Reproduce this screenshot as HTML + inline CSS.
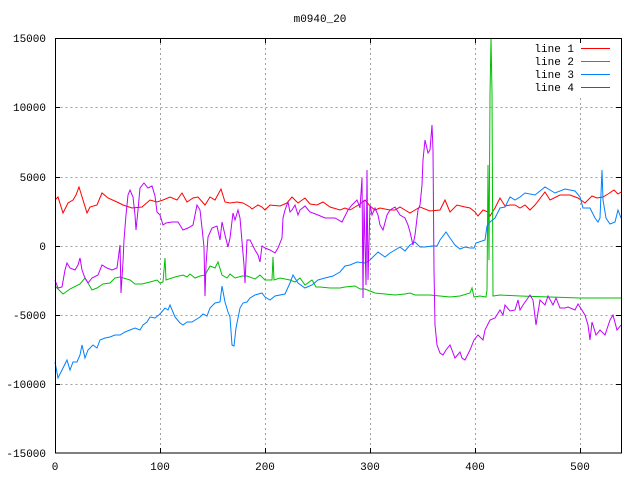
<!DOCTYPE html>
<html><head><meta charset="utf-8"><style>
html,body{margin:0;padding:0;background:#fff;width:640px;height:480px;overflow:hidden}
svg text{font-family:"Liberation Mono","DejaVu Sans Mono",monospace;font-size:11px;fill:#000}
</style></head><body>
<svg width="640" height="480" viewBox="0 0 640 480" xmlns="http://www.w3.org/2000/svg">
<rect width="640" height="480" fill="#fff"/>
<g stroke="#a0a0a0" stroke-width="1" stroke-dasharray="2,3" fill="none">
<path d="M55.5 107.5H621M55.5 177.5H621M55.5 246.5H621M55.5 315.5H621M55.5 384.5H621"/>
<path d="M160.5 38V453M265.5 38V453M370.5 38V453M475.5 38V453M580.5 38V453"/>
</g>
<text x="320" y="22" text-anchor="middle">m0940_20</text>
<g text-anchor="end">
<text x="46" y="42">15000</text><text x="46" y="111">10000</text><text x="46" y="181">5000</text>
<text x="46" y="250">0</text><text x="46" y="319">-5000</text><text x="46" y="388">-10000</text><text x="46" y="457">-15000</text>
</g>
<g text-anchor="middle">
<text x="55" y="470">0</text><text x="160" y="470">100</text><text x="265" y="470">200</text>
<text x="370" y="470">300</text><text x="475" y="470">400</text><text x="580" y="470">500</text>
</g>
<g fill="none" stroke-width="1">
<polyline stroke="#ff0000" points="55,200 58,197 63,213 68,203 73,200 76,195 79,187 83,200 87,213 90,207 97,205 102,193 108,198 117,202 123,205 132,208 142,207 150,200 157,202 163,200 170,197 177,200 182,193 187,202 193,198 198,197 205,205 210,197 215,200 221,189 225,202 230,203 237,202 243,203 250,207 252,209 258,205 262,207 265,210 270,205 280,206 287,203 292,197 298,203 305,198 310,204 317,205 323,202 330,207 340,210 345,208 350,210 355,207 360,204 365,200 370,206 375,210 380,208 390,210 395,210 400,207 405,210 410,213 415,210 420,207 430,211 440,210 445,200 450,212 457,205 465,207 470,208 475,212 478,216 483,210 488,212 490,216 495,208 500,198 505,206 510,205 515,205 520,208 525,205 530,210 535,205 545,192 550,200 560,195 570,195 578,198 585,203 592,196 597,198 603,197 608,194 614,190 618,194 621,192"/>
<polyline stroke="#00c000" points="55,286 60,291 63,294 70,289 80,284 85,278 88,283 92,290 97,288 103,284 110,283 115,278 120,277 130,280 135,284 142,284 150,282 157,280 160,283 163,282 165,258 166,280 175,277 183,275 187,277 190,274 195,278 200,276 205,275 210,266 215,268 218,262 222,275 227,278 230,274 235,278 242,276 247,276 255,279 260,275 265,280 272,280 273,257 274,280 280,278 290,280 295,282 300,278 305,285 312,280 316,287 320,287 330,288 340,288 345,287 355,286 360,289 365,289 370,291 375,293 385,294 395,295 405,294 410,293 415,295 420,295 430,295 440,296 450,297 460,296 470,293 472,288 474,297 480,296 486,297 487,290 488,165 489,260 490,95 491,38 492,92 493,296 500,295 520,296 550,297 580,298 621,298"/>
<polyline stroke="#0080ff" points="55,362 58,378 62,370 67,360 70,370 73,362 77,362 80,355 82,345 85,358 88,350 93,345 97,348 100,340 105,338 110,337 115,335 120,335 125,332 130,330 135,328 140,330 143,325 147,322 150,317 155,318 160,314 165,308 168,310 170,305 175,317 180,323 183,325 187,322 192,322 200,317 203,314 207,316 210,308 215,303 220,302 222,286 225,302 228,312 230,317 232,345 234,346 236,328 240,308 243,303 247,302 250,298 255,295 262,293 265,297 270,300 275,296 285,294 290,283 293,275 298,283 305,288 312,285 318,280 325,278 333,276 340,272 345,266 350,265 357,262 365,263 370,260 378,252 385,257 390,253 395,250 400,247 405,251 410,245 415,242 420,247 425,247 432,246 437,246 440,240 446,232 450,238 455,245 460,249 465,247 470,248 474,248 476,243 485,240 487,226 490,222 495,218 500,208 505,207 510,197 515,200 520,197 525,193 535,195 545,187 550,190 555,193 565,189 575,191 580,197 583,208 590,208 595,218 598,222 600,218 602,170 603,200 606,218 610,224 615,222 618,210 621,218"/>
<polyline stroke="#c000ff" points="55,280 58,288 62,287 65,270 67,263 70,268 75,270 78,265 80,258 82,270 85,278 88,283 92,278 98,275 102,265 107,268 112,270 117,268 120,245 121,293 123,262 124,240 126,215 128,195 130,190 133,197 135,215 136,230 138,210 140,188 144,183 148,188 152,186 155,196 157,212 160,215 163,225 166,223 172,222 178,222 183,230 188,228 193,225 197,205 200,210 202,228 204,247 205,296 206,265 208,237 212,228 217,226 220,240 222,222 225,235 228,247 230,238 233,213 235,220 238,210 240,218 244,265 245,283 247,240 250,240 255,250 258,255 260,262 262,246 265,248 270,250 275,253 278,248 282,238 283,218 285,210 288,202 290,212 292,210 295,205 298,215 300,210 305,206 310,212 318,215 325,218 335,218 342,222 348,210 352,205 357,200 360,208 362,178 363,298 364,200 366,285 367,170 368,280 370,205 372,215 375,208 378,215 380,225 383,230 387,215 390,210 395,207 400,215 405,218 408,225 410,232 413,245 415,235 418,210 420,205 422,185 423,160 425,140 428,153 430,150 432,125 433,150 434,270 435,325 437,345 440,353 443,355 446,350 450,345 455,358 460,352 462,358 465,360 470,350 474,340 478,335 483,340 485,330 490,320 495,318 500,310 503,315 505,305 510,311 515,310 518,300 520,310 523,305 530,295 533,300 536,325 540,300 545,305 548,296 553,305 556,298 560,308 565,308 568,307 575,310 578,304 585,315 588,325 590,340 592,322 596,335 600,330 605,335 610,320 613,315 617,330 621,325"/>
</g>
<rect x="530" y="40" width="88" height="56" fill="#fff"/>
<g text-anchor="end">
<text x="574" y="52">line 1</text><text x="574" y="65">line 2</text><text x="574" y="78">line 3</text><text x="574" y="91">line 4</text>
</g>
<line x1="581" y1="48.5" x2="610" y2="48.5" stroke="#ff0000"/>
<line x1="581" y1="61.5" x2="610" y2="61.5" stroke="#00c000"/>
<line x1="581" y1="74.5" x2="610" y2="74.5" stroke="#0080ff"/>
<line x1="581" y1="87.5" x2="610" y2="87.5" stroke="#c000ff"/>
<rect x="55.5" y="38.5" width="566" height="414.5" fill="none" stroke="#000"/>
<path stroke="#000" d="M55.5 38v5M160.5 38v5M265.5 38v5M370.5 38v5M475.5 38v5M580.5 38v5M55.5 453v-5M160.5 453v-5M265.5 453v-5M370.5 453v-5M475.5 453v-5M580.5 453v-5M55 107.5h5M55 177.5h5M55 246.5h5M55 315.5h5M55 384.5h5M621 107.5h-5M621 177.5h-5M621 246.5h-5M621 315.5h-5M621 384.5h-5"/>
</svg>
</body></html>
